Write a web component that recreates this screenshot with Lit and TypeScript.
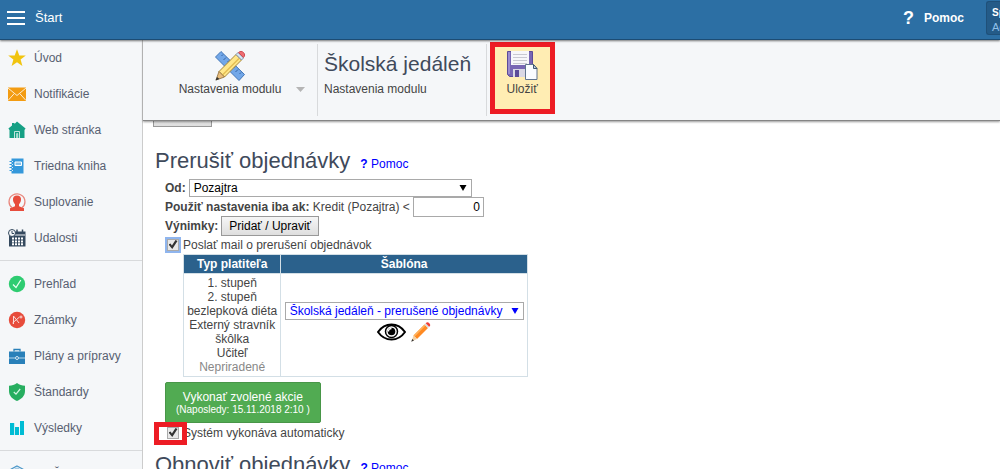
import { LitElement, html, css, svg } from "lit";
import { customElement, state } from "lit/decorators.js";

type NavItem = { label: string; icon: unknown };

const icon = (content: unknown) => html`<svg class="nav-icon" viewBox="0 0 18 18" aria-hidden="true">${content}</svg>`;

const ICONS = {
  star: svg`<path fill="#f1c40f" d="M9 0.2 11.3 6.4 17.8 6.6 12.6 10.6 14.4 17 9 13.3 3.6 17 5.4 10.6 0.2 6.6 6.7 6.4Z"/>`,
  mail: svg`<path fill="#f39c12" d="M0 2.500h18v13.500H0z"/><path fill="none" stroke="#fdebd0" stroke-width="1" d="M0 3l9 7.500L18 3M0 15.500l6.300-7M18 15.500l-6.300-7"/>`,
  house: svg`<path fill="#16a085" d="M9 0.500 17.600 7.500 16.500 9V17H1.500V9L0.400 7.500 4 4.500V2h2.500v1z"/><path fill="none" stroke="#bfe5dc" d="M6.500 17v-6.500h5V17M8.700 17v-4.500h1V17"/>`,
  book: svg`<path fill="#3498db" d="M3.500 1.500h12v15h-12z"/><path stroke="#3498db" stroke-width="1" d="M1.500 4.500h3M1.500 7.500h3M1.500 10.500h3M1.500 13.500h3"/><path stroke="#d6eaf8" stroke-width="1" stroke-dasharray="1 2" d="M4.500 4v10"/><path fill="#85c1e9" stroke="#fff" d="M7 5h6.500v3.500H7z"/>`,
  person: svg`<path fill="none" stroke="#e9867c" stroke-width="1.300" d="M4 14.500C0 12 0 5 4.500 2.200 7.500.5 11 .5 13.500 2.200 18 5 18 12 14 14.500"/><path fill="#e74c3c" d="M9 2.500c3 0 4.300 1.800 4 4.500-.2 2-1.200 3.500-2 4.200v2l5 2V18H2v-2.800l5-2v-2C6.200 10.500 5.200 9 5 7c-.3-2.700 1-4.500 4-4.500z"/>`,
  calendar: svg`<path fill="#34495e" d="M1 2.500h16.500V17.500H1z"/><path fill="#f5f7f9" d="M7 5.500h10v1H7z"/><path fill="none" stroke="#34495e" stroke-width="1.500" d="M9 0.500v3M14.500 .5v3"/><circle cx="4" cy="4" r="3.500" fill="#f5f7f9" stroke="#34495e"/><path fill="none" stroke="#34495e" d="M4 2v2.500h2"/><path fill="none" stroke="#fff" stroke-width="2" stroke-dasharray="2 1" d="M4 9.500h11M4 12.500h11M4 15.300h11"/>`,
  check: svg`<circle cx="9" cy="9" r="8.200" fill="#2ecc71"/><path fill="none" stroke="#e8fff0" stroke-width="1.300" d="M5 9.500 8 12.500 12.800 5"/>`,
  grade: svg`<circle cx="9" cy="9" r="8.200" fill="#e74c3c"/><path fill="none" stroke="#fadbd8" d="M5.500 13V5l5.500 7M4.500 12l7-6M11.500 6h3M13 4.500v3"/>`,
  briefcase: svg`<path fill="#2980b9" d="M1 4.500h16V17H1z"/><path fill="none" stroke="#2980b9" stroke-width="1.300" d="M6 4.500v-2h6v2"/><path fill="none" stroke="#b5d5ea" d="M1 11h6.500M10.500 11H17"/><circle cx="9" cy="11" r="1.500" fill="#2980b9" stroke="#d4e6f1"/>`,
  shield: svg`<path fill="#27ae60" d="M9 0c2.500 2 5 2.600 8 2.800V8c0 5-3.500 8-8 10C4.500 16 1 13 1 8V2.800C4 2.600 6.500 2 9 0z"/><path fill="none" stroke="#d5f5e3" stroke-width="1.200" d="M5.800 9 8 11.200 12.200 6"/>`,
  bars: svg`<path fill="#00bcd4" d="M2 4h4.200v12H2zM7 8h4v8H7zM12 2h4v14h-4z"/>`,
  gem: svg`<path fill="none" stroke="#4a97c9" stroke-width="1.200" d="M9 1 16.500 5v8L9 17 1.500 13V5z"/><path fill="none" stroke="#8cbcdc" d="M4 5.500 9 3l5 2.500v6L9 14l-5-2.500z"/>`,
};

const PRIMARY: NavItem[] = [
  { label: "Úvod", icon: ICONS.star },
  { label: "Notifikácie", icon: ICONS.mail },
  { label: "Web stránka", icon: ICONS.house },
  { label: "Triedna kniha", icon: ICONS.book },
  { label: "Suplovanie", icon: ICONS.person },
  { label: "Udalosti", icon: ICONS.calendar },
];
const AGENDA: NavItem[] = [
  { label: "Prehľad", icon: ICONS.check },
  { label: "Známky", icon: ICONS.grade },
  { label: "Plány a prípravy", icon: ICONS.briefcase },
  { label: "Štandardy", icon: ICONS.shield },
  { label: "Výsledky", icon: ICONS.bars },
];
const MORE: NavItem[] = [{ label: "Na Škole", icon: ICONS.gem }];

const PAYERS = ["1. stupeň", "2. stupeň", "bezlepková diéta", "Externý stravník", "škôlka", "Učiteľ"];

@customElement("app-root")
export class AppRoot extends LitElement {
  @state() private sendMail = true;
  @state() private automatic = true;

  static styles = css`
    :host {
      display: flex;
      flex-direction: column;
      height: 100vh;
      overflow: hidden;
      background: #fff;
      color: #444;
      font: 12px/14px "Liberation Sans", Arial, sans-serif;
    }
    * { box-sizing: border-box; }
    a { text-decoration: none; color: inherit; }
    button, select, input { font: inherit; margin: 0; }
    svg { display: block; flex: none; }

    .topbar {
      display: flex;
      align-items: center;
      flex: none;
      height: 40px;
      padding: 0 0 4px 7px;
      background: #2c6fa4;
      border-bottom: 1px solid #1c4c74;
      box-shadow: 0 1px 2px #0008;
      color: #fff;
      z-index: 2;
    }
    .start {
      display: flex;
      align-items: center;
      gap: 10px;
      padding: 0;
      border: 0;
      background: none;
      color: #fff;
      font-size: 13px;
      flex: 1;
    }
    .start path { stroke-width: 2; }
    .help { display: flex; align-items: center; gap: 10px; font-weight: bold; }
    .mark { font-size: 18px; line-height: 20px; }
    .account {
      width: 14px;
      height: 34px;
      margin-left: 22px;
      padding: 3px 0 0 5px;
      overflow: hidden;
      white-space: nowrap;
      background: #245b88;
      border: 1px solid #1f5079;
      border-right: 0;
      border-radius: 3px 0 0 3px;
      font-size: 10px;
      line-height: 15px;
    }
    .account span { display: block; color: #8fc0e8; font-size: 11px; }

    .body { display: flex; flex: 1; min-height: 0; }
    .sidebar {
      flex: none;
      width: 143px;
      overflow: hidden;
      background: #f5f7f9;
      border-right: 1px solid #ccc;
    }
    .group { display: flex; flex-direction: column; padding-bottom: 4px; }
    .group + .group { border-top: 1px solid #d8dadc; padding-top: 5px; }
    .nav-item {
      display: flex;
      align-items: center;
      gap: 8px;
      height: 36px;
      flex: none;
      padding-left: 8px;
      color: #576071;
    }
    .nav-icon { width: 18px; height: 18px; }

    .main { flex: 1; min-width: 0; display: flex; flex-direction: column; }
    .toolbar {
      display: flex;
      flex: none;
      height: 81px;
      padding: 4px 0;
      background: #f5f7f9;
      border-bottom: 1px solid #858585;
      box-shadow: 0 1px 2px #0006;
      z-index: 1;
    }
    .tool {
      display: flex;
      align-items: center;
      justify-content: center;
      gap: 15px;
      width: 174px;
      padding: 0 0 15px 24px;
      border: 0;
      background: none;
      color: #444;
    }
    .stack { display: flex; flex-direction: column; align-items: center; }
    .caret { margin-top: 34px; }
    .title {
      padding: 8px 15px 0 6px;
      border-left: 1px solid #d8dadc;
      border-right: 1px solid #d8dadc;
    }
    h1, h2 { margin: 0; color: #3f4a5b; font-weight: normal; }
    h1 { font-size: 21px; line-height: 24px; }
    .title p { margin: 6px 0 0; }
    .save {
      position: relative;
      display: flex;
      flex-direction: column;
      align-items: center;
      align-self: flex-start;
      width: 60px;
      height: 68px;
      margin-left: 5px;
      padding: 6px 0 0;
      border: 0;
      background: #ffedb3;
      color: #444;
    }
    .highlight { position: absolute; border: 5px solid #ed1c24; pointer-events: none; }
    .save .highlight { inset: -2px -3px -2px -2px; }

    .content { padding-left: 10px; flex: 1; min-height: 0; overflow: hidden; }
    .scrolled { display: flex; align-items: flex-end; height: 6px; overflow: hidden; }
    .scrolled button { flex: none; width: 59px; height: 22px; }
    .heading { display: flex; align-items: baseline; gap: 10px; padding-top: 21px; margin-left: 2px; }
    h2 { font-size: 22px; line-height: 26px; }
    .heading a { color: #00f; }
    .settings { display: flex; flex-direction: column; align-items: flex-start; padding: 4px 0 0 12px; }
    .row { display: flex; align-items: center; gap: 3px; height: 19px; }
    label.strong, .strong { font-weight: bold; }
    .picker { position: relative; display: inline-block; }
    .picker svg { position: absolute; right: 5px; top: 5px; pointer-events: none; }
    select {
      appearance: none;
      display: block;
      width: 100%;
      height: 18px;
      padding: 0 4px;
      border: 1px solid #a9a9a9;
      border-radius: 0;
      background: #fff;
      color: #000;
    }
    .when { width: 283px; }
    .template { width: 239px; }
    .template select { color: #00f; }
    .credit {
      width: 71px;
      height: 20px;
      padding: 0 3px;
      border: 1px solid #a9a9a9;
      text-align: right;
      color: #000;
    }
    .plain {
      height: 20px;
      padding: 0 7px;
      border: 1px solid #999;
      border-radius: 0;
      background: linear-gradient(#f6f6f6, #dedede);
      color: #000;
    }
    .tick { gap: 4px; position: relative; }
    input[type="checkbox"] {
      appearance: none;
      display: grid;
      place-items: center;
      width: 12px;
      height: 12px;
      margin: 0 0 0 2px;
      border: 1px solid #aaa;
      background: #e8e8e8;
    }
    input[type="checkbox"]:checked::before {
      content: "";
      width: 9px;
      height: 9px;
      background: #333;
      clip-path: polygon(0 50%, 22% 38%, 38% 60%, 78% 0, 100% 12%, 42% 100%);
    }
    .active { box-shadow: 0 0 0 2px #8fb5ee; }
    .tick .highlight { left: -11px; top: -1px; width: 33px; height: 23px; }
    table { width: 345px; margin-left: 18px; border-collapse: collapse; text-align: center; }
    th, td { border: 1px solid #d3dfe6; padding: 2px 3px; }
    th { background: #2b618c; color: #fff; height: 19px; line-height: 14px; }
    td { height: 103px; }
    .choice { padding-bottom: 8px; }
    .payer { white-space: nowrap; }
    .muted { color: #888; }
    .actions { display: flex; justify-content: center; align-items: center; gap: 5px; margin-top: 2px; }
    .actions button { padding: 0; border: 0; background: none; }
    .run {
      margin-top: 5px;
      height: 41px;
      padding: 0 10px;
      border: 1px solid #489648;
      border-radius: 2px;
      background: #51ab52;
      color: #fff;
    }
    .run small { display: block; font-size: 10px; line-height: 11px; }
    .next { padding-top: 10px; }
  `;

  private nav(items: NavItem[]) {
    return html`<div class="group">
      ${items.map((i) => html`<a class="nav-item" href="#">${icon(i.icon)}<span>${i.label}</span></a>`)}
    </div>`;
  }

  private arrow(color: string) {
    return html`<svg width="8" height="8" viewBox="0 0 8 8" aria-hidden="true"><path fill=${color} d="M0.500 1h7L4 7z" /></svg>`;
  }

  private heading(text: string, next = false) {
    return html`<div class="heading ${next ? "next" : ""}"><h2>${text}</h2><a href="#"><b>?</b> Pomoc</a></div>`;
  }

  render() {
    return html`
      <header class="topbar">
        <button class="start">
          <svg width="18" height="14" viewBox="0 0 18 14"><path stroke="#fff" d="M0 1h18M0 7h18M0 13h18" /></svg>
          Štart
        </button>
        <a class="help" href="#"><span class="mark">?</span>Pomoc</a>
        <div class="account"><b>Správca</b><span>Admin</span></div>
      </header>
      <div class="body">
        <nav class="sidebar">${this.nav(PRIMARY)}${this.nav(AGENDA)}${this.nav(MORE)}</nav>
        <div class="main">
          <div class="toolbar">
            <button class="tool">
              <span class="stack">
                <svg width="32" height="32" viewBox="0 0 32 32">
                  <path fill="#72a7e8" stroke="#4377b8" stroke-width="1" d="M1.500 7 7 1.500 30.500 24.500 25 30.500z" />
                  <path stroke="#3565a5" d="M9 4.500 7.500 6M12 7.500 9.500 10M15 10.500 13.500 12M21 16.500 19.500 18M24 19.500 21.500 22M27 22.500 25.500 24" />
                  <path fill="#ffe78a" stroke="#a78639" d="M5 21.500 22 4.500 27.500 10 10.500 27z" />
                  <path stroke="#e4bd52" stroke-width="1.500" d="M8.500 25 25 8.500" />
                  <path fill="#e9bd7c" stroke="#8c6934" stroke-width=".8" d="M5 21.500 2 30l8.500-3z" />
                  <path fill="#333" d="M3 27 1.500 30.500 5.500 29z" />
                  <path fill="#d9e5f2" stroke="#8195ad" d="M22 4.500l2-2 5.500 5.500-2 2z" />
                  <path fill="#ee6d72" stroke="#cf4e55" d="M24.500 2.500C26 1 28 1 29.500 2.500s1.500 3.500 0 5z" />
                </svg>
                Nastavenia modulu
              </span>
              <svg class="caret" width="9" height="5" viewBox="0 0 9 5"><path fill="#b5b5b5" d="M0 0h9L4.500 5z" /></svg>
            </button>
            <div class="title"><h1>Školská jedáleň</h1><p>Nastavenia modulu</p></div>
            <button class="save">
              <svg width="32" height="32" viewBox="0 0 32 32">
                <path fill="#7866b4" stroke="#5c4b98" d="M1.500 1.500h25v25h-23l-2-2z" />
                <path fill="#9a8bce" d="M2 2h2v22H2z" />
                <path fill="#f7f7fa" d="M5 1h18v14H5z" />
                <path stroke="#c9c9d2" d="M7 4.500h14M7 7.500h14M7 10.500h14M7 13.500h14" />
                <path fill="#d9d8e4" d="M7 19h15v8H7z" />
                <path fill="#5c4b98" d="M9 20h4v7H9z" />
                <path fill="#f9fcff" stroke="#60758e" d="M19.500 14.500h8l3.500 4v11H19.500z" />
                <path fill="#c8d7e8" stroke="#405870" d="M27.500 14.500v4H31z" />
              </svg>
              Uložiť
              <span class="highlight"></span>
            </button>
          </div>
          <main class="content">
            <div class="scrolled"><button class="plain" aria-label="Uložiť"></button></div>
            ${this.heading("Prerušiť objednávky")}
            <div class="settings">
              <div class="row">
                <label class="strong" for="when">Od:</label>
                <span class="picker when"><select id="when"><option>Pozajtra</option></select>${this.arrow("#000")}</span>
              </div>
              <div class="row">
                <label for="credit"><b>Použiť nastavenia iba ak:</b> Kredit (Pozajtra) &lt;</label>
                <input class="credit" id="credit" value="0" />
              </div>
              <div class="row"><span class="strong">Výnimky:</span><button class="plain">Pridať / Upraviť</button></div>
              <div class="row tick">
                <input class="active" id="mail" type="checkbox" .checked=${this.sendMail}
                  @change=${() => (this.sendMail = !this.sendMail)} />
                <label for="mail">Poslať mail o prerušení objednávok</label>
              </div>
              <table>
                <thead><tr><th>Typ platiteľa</th><th>Šablóna</th></tr></thead>
                <tbody>
                  <tr>
                    <td class="payer">${PAYERS.map((p) => html`<div>${p}</div>`)}<div class="muted">Nepriradené</div></td>
                    <td class="choice">
                      <span class="picker template">
                        <select aria-label="Šablóna"><option>Školská jedáleň - prerušené objednávky</option></select>${this.arrow("#00f")}
                      </span>
                      <div class="actions">
                        <button aria-label="Zobraziť">
                          <svg width="29" height="20" viewBox="0 0 29 20">
                            <path fill="#fff" stroke="#000" stroke-width="2" d="M1 10C8 0 21 0 28 10 21 20 8 20 1 10z" />
                            <circle cx="14.500" cy="9.500" r="6" fill="#fff" stroke="#000" stroke-width="1.500" />
                            <circle cx="14.500" cy="9.500" r="3.800" />
                            <path fill="none" stroke="#fff" stroke-width="1.300" d="M11.500 9.500c0-2 1-3 3-3" />
                          </svg>
                        </button>
                        <button aria-label="Upraviť">
                          <svg width="20" height="20" viewBox="0 0 20 20">
                            <path fill="#ff8a22" d="M2.500 13.500 13.500 2.500 17 6 6 17z" />
                            <path fill="#ffb25c" d="M2.500 13.500 13.500 2.500 14.600 3.600 3.700 14.700z" />
                            <path fill="#f1d0a4" d="M2.500 13.500 0.500 19.500 6 17z" />
                            <path fill="#333" d="M1.200 17 .3 19.700 3 18.600z" />
                            <path fill="#d8dde2" d="M13.500 2.500l1.200-1.200 3.500 3.500L17 6z" />
                            <path fill="#ee3e38" d="M14.700 1.300C16 0 17 0 18.300 1.200s1.200 2.300-.1 3.600z" />
                          </svg>
                        </button>
                      </div>
                    </td>
                  </tr>
                </tbody>
              </table>
              <button class="run">Vykonať zvolené akcie<small>(Naposledy: 15.11.2018 2:10 )</small></button>
              <div class="row tick">
                <input id="auto" type="checkbox" .checked=${this.automatic}
                  @change=${() => (this.automatic = !this.automatic)} />
                <label for="auto">Systém vykonáva automaticky</label>
                <span class="highlight"></span>
              </div>
            </div>
            ${this.heading("Obnoviť objednávky", true)}
          </main>
        </div>
      </div>
    `;
  }
}
